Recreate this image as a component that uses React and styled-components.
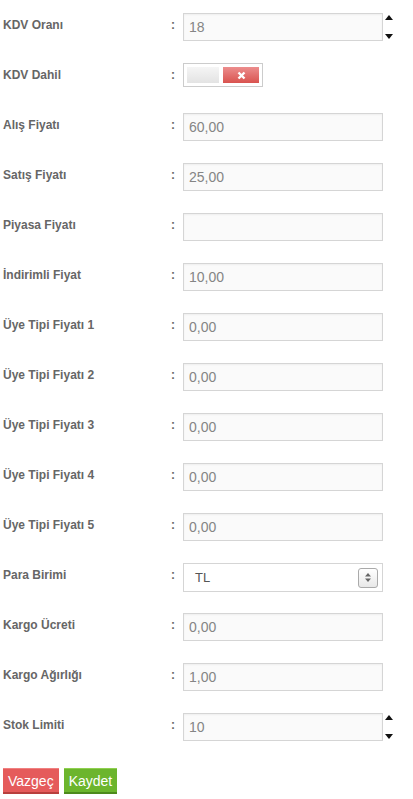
import styled, { createGlobalStyle } from 'styled-components';

const GlobalStyle = createGlobalStyle`
	body {
		margin: 0;
		background: #fff;
		font-family: "Liberation Sans", Arial, sans-serif;
	}
`;

const fields = [
	{ label: 'KDV Oranı', type: 'number', value: '18' },
	{ label: 'KDV Dahil', type: 'toggle' },
	{ label: 'Alış Fiyatı', value: '60,00' },
	{ label: 'Satış Fiyatı', value: '25,00' },
	{ label: 'Piyasa Fiyatı', value: '' },
	{ label: 'İndirimli Fiyat', value: '10,00' },
	{ label: 'Üye Tipi Fiyatı 1', value: '0,00' },
	{ label: 'Üye Tipi Fiyatı 2', value: '0,00' },
	{ label: 'Üye Tipi Fiyatı 3', value: '0,00' },
	{ label: 'Üye Tipi Fiyatı 4', value: '0,00' },
	{ label: 'Üye Tipi Fiyatı 5', value: '0,00' },
	{ label: 'Para Birimi', type: 'select', value: 'TL' },
	{ label: 'Kargo Ücreti', value: '0,00' },
	{ label: 'Kargo Ağırlığı', value: '1,00' },
	{ label: 'Stok Limiti', type: 'number', value: '10' },
];

function Control({ field }) {
	if (field.type === 'toggle') {
		return (
			<Toggle>
				<ToggleOff />
				<ToggleOn>
					<svg width="9" height="9" viewBox="0 0 9 9">
						<path d="M1.5 1.5 L7.5 7.5 M7.5 1.5 L1.5 7.5" stroke="#fff" strokeWidth="2.4" />
					</svg>
				</ToggleOn>
			</Toggle>
		);
	}
	if (field.type === 'select') {
		return (
			<Select>
				<span>{field.value}</span>
				<SelectButton>
					<svg width="8" height="11" viewBox="0 0 8 11">
						<path d="M4 1 L7 4.5 H1 Z" fill="#666" />
						<path d="M4 10 L7 6.5 H1 Z" fill="#666" />
					</svg>
				</SelectButton>
			</Select>
		);
	}
	return (
		<InputWrap>
			<Input readOnly value={field.value} />
			{field.type === 'number' && (
				<Spinner>
					<svg width="8" height="5" viewBox="0 0 8 5">
						<path d="M4 0 L8 5 H0 Z" fill="#111" />
					</svg>
					<svg width="8" height="5" viewBox="0 0 8 5">
						<path d="M4 5 L8 0 H0 Z" fill="#111" />
					</svg>
				</Spinner>
			)}
		</InputWrap>
	);
}

export default function App() {
	return (
		<>
			<GlobalStyle />
			<Form>
				{fields.map((f) => (
					<Row key={f.label}>
						<Label>{f.label}</Label>
						<Colon>:</Colon>
						<Control field={f} />
					</Row>
				))}
				<Buttons>
					<Button $color="red">Vazgeç</Button>
					<Button $color="green">Kaydet</Button>
				</Buttons>
			</Form>
		</>
	);
}

const Form = styled.div`
	padding: 2px 0 0 3px;
	width: 410px;
`;

const Row = styled.div`
	display: flex;
	align-items: flex-start;
	height: 50px;
	padding-top: 11px;
	box-sizing: border-box;
`;

const Label = styled.div`
	width: 168px;
	padding-top: 5px;
	font-size: 12px;
	line-height: 14px;
	font-weight: bold;
	color: #666;
`;

const Colon = styled.div`
	width: 12px;
	padding-top: 5px;
	font-size: 12px;
	line-height: 14px;
	font-weight: bold;
	color: #666;
`;

const InputWrap = styled.div`
	display: flex;
	align-items: flex-start;
`;

const Input = styled.input`
	box-sizing: border-box;
	width: 200px;
	height: 28px;
	margin: 0;
	padding: 0 5px;
	border: 1px solid #d5d5d5;
	border-radius: 0;
	background: #fafafa;
	box-shadow: inset 0 1px 2px rgba(0, 0, 0, 0.05);
	font-family: "Liberation Sans", Arial, sans-serif;
	font-size: 14px;
	color: #858585;
	outline: none;
`;

const Spinner = styled.div`
	display: flex;
	flex-direction: column;
	justify-content: space-between;
	height: 24px;
	padding: 2px 0 0 2px;
`;

const Toggle = styled.div`
	display: flex;
	gap: 4px;
	box-sizing: border-box;
	width: 80px;
	height: 24px;
	padding: 3px;
	border: 1px solid #ccc;
	background: #fff;
`;

const ToggleOff = styled.div`
	width: 32px;
	background: linear-gradient(#f5f5f5, #e3e3e3);
`;

const ToggleOn = styled.div`
	flex: 1;
	display: flex;
	align-items: center;
	justify-content: center;
	background: linear-gradient(#ec8d8d, #d9534f);
`;

const Select = styled.div`
	box-sizing: border-box;
	display: flex;
	align-items: center;
	justify-content: space-between;
	width: 200px;
	height: 29px;
	padding: 0 4px 0 11px;
	border: 1px solid #d5d5d5;
	background: #fff;
	font-size: 13px;
	color: #555;
`;

const SelectButton = styled.div`
	box-sizing: border-box;
	display: flex;
	align-items: center;
	justify-content: center;
	width: 20px;
	height: 20px;
	border: 1px solid #aaa;
	border-radius: 3px;
	background: linear-gradient(#fff, #e8e8e8);
`;

const Buttons = styled.div`
	display: flex;
	gap: 5px;
	margin-top: 16px;
`;

const Button = styled.button`
	height: 26px;
	padding: 0 5px;
	margin: 0;
	border: none;
	border-bottom: 2px solid ${(p) => (p.$color === 'red' ? '#b83f3d' : '#4d8a1c')};
	border-top: 1px solid ${(p) => (p.$color === 'red' ? '#f08080' : '#8fd050')};
	background: ${(p) => (p.$color === 'red' ? '#e55b5b' : '#6cb52d')};
	color: #fff;
	font-family: "Liberation Sans", Arial, sans-serif;
	font-size: 14px;
	cursor: pointer;
`;
